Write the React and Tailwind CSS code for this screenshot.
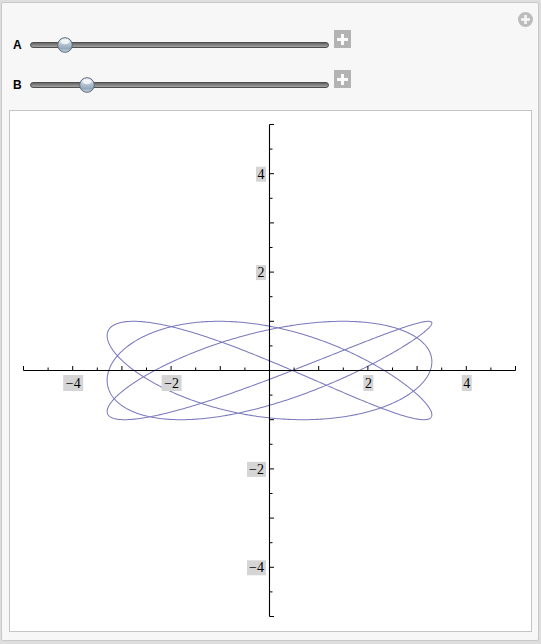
import React from 'react';

// plot coordinates (page pixels)
const OX = 269.5;
const OY = 370.5;
const S = 49.2;
const px = (v) => OX + v * S;
const py = (v) => OY - v * S;

function curvePath() {
  const pts = [];
  const n = 1400;
  for (let i = 0; i <= n; i++) {
    const t = (i / n) * Math.PI * 2;
    const x = 3.3 * Math.sin(3 * t + Math.PI / 4 - 0.2 * Math.sin(t));
    const y = -Math.sin(4 * t);
    pts.push(`${i ? 'L' : 'M'}${px(x).toFixed(2)},${py(y).toFixed(2)}`);
  }
  return pts.join('');
}

function Knob() {
  return (
    <svg width="16" height="16" viewBox="0 0 16 16">
      <defs>
        <linearGradient id="knobFill" x1="0" y1="0" x2="0" y2="1">
          <stop offset="0" stopColor="#f4f7fa" />
          <stop offset="0.45" stopColor="#b4c3d2" />
          <stop offset="0.75" stopColor="#93a7bc" />
          <stop offset="1" stopColor="#d2dde8" />
        </linearGradient>
      </defs>
      <circle cx="8" cy="8" r="7.3" fill="url(#knobFill)" stroke="#5a6774" strokeWidth="1" />
      <ellipse cx="8" cy="4.8" rx="4.2" ry="2.4" fill="#ffffff" opacity="0.7" />
    </svg>
  );
}

function PlusBox() {
  return (
    <div className="w-[17px] h-[18px] bg-[#b3b3b3] flex items-center justify-center">
      <svg width="11" height="11" viewBox="0 0 11 11">
        <rect x="4" y="0" width="3" height="11" fill="#fafafa" />
        <rect x="0" y="4" width="11" height="3" fill="#fafafa" />
      </svg>
    </div>
  );
}

function SliderRow({ label, knobX }) {
  return (
    <div className="flex items-start h-[24px]">
      <div className="w-[28px] pl-[11px] mt-[8px] text-[12px] leading-[14px] font-semibold text-black">
        {label}
      </div>
      <div className="relative w-[299px] h-[24px]">
        <div className="mt-[12px] h-[6px] rounded-full border border-[#4f4f4f] bg-gradient-to-b from-[#656565] to-[#a5a5a5]" />
        <div className="absolute top-[7px]" style={{ left: knobX - 30 - 8 }}>
          <Knob />
        </div>
      </div>
      <div className="ml-[5px]">
        <PlusBox />
      </div>
    </div>
  );
}

function Plot() {
  const ticks = [];
  for (let k = -10; k <= 10; k++) {
    if (k === 0) continue;
    const v = k / 2;
    const major = k % 2 === 0;
    const len = major ? 4.5 : 3;
    ticks.push(
      <line key={'x' + k} x1={px(v)} x2={px(v)} y1={OY} y2={OY - len} stroke="#000" strokeWidth="1" />
    );
    ticks.push(
      <line key={'y' + k} y1={py(v)} y2={py(v)} x1={OX} x2={OX + len} stroke="#000" strokeWidth="1" />
    );
  }

  const xLabels = [
    { v: -4, t: '\u22124', w: 20 },
    { v: -2, t: '\u22122', w: 20 },
    { v: 2, t: '2', w: 10 },
    { v: 4, t: '4', w: 10 },
  ];
  const yLabels = [
    { v: 4, t: '4', w: 10 },
    { v: 2, t: '2', w: 10 },
    { v: -2, t: '\u22122', w: 19 },
    { v: -4, t: '\u22124', w: 19 },
  ];

  return (
    <svg width="521" height="520" viewBox="10 111 521 520" className="block">
      <path d={curvePath()} fill="none" stroke="#6b6bb6" strokeWidth="1.05" opacity="0.9" />
      <line x1={px(-5)} x2={px(5)} y1={OY} y2={OY} stroke="#000" strokeWidth="1.1" />
      <line x1={OX} x2={OX} y1={py(5)} y2={py(-5)} stroke="#000" strokeWidth="1.1" />
      {ticks}
      {xLabels.map((l) => (
        <g key={'xl' + l.v}>
          <rect x={px(l.v) - l.w / 2 + 0.5} y={375} width={l.w} height={16} fill="#d5d5d5" />
          <text
            x={px(l.v) + 0.5}
            y={388}
            textAnchor="middle"
            fontSize="14"
            fontFamily="'Liberation Serif', serif"
            fill="#000"
          >
            {l.t}
          </text>
        </g>
      ))}
      {yLabels.map((l) => (
        <g key={'yl' + l.v}>
          <rect x={266 - l.w} y={py(l.v) - 7} width={l.w} height={15} fill="#d5d5d5" />
          <text
            x={266 - l.w / 2}
            y={py(l.v) + 5}
            textAnchor="middle"
            fontSize="14"
            fontFamily="'Liberation Serif', serif"
            fill="#000"
          >
            {l.t}
          </text>
        </g>
      ))}
    </svg>
  );
}

export default function App() {
  return (
    <div className="w-[541px] h-[644px] bg-[#dedede] pt-[2px] pl-[1px] overflow-hidden" style={{ fontFamily: "'Liberation Sans', Arial, sans-serif" }}>
      <div className="relative w-[538px] h-[639px] border border-[#c8c8c8] bg-[#f7f7f7] rounded-[2px]">
        {/* top-right options button */}
        <div className="absolute top-[9px] left-[516px] w-[15px] h-[15px] rounded-full bg-[#bcbcbc] flex items-center justify-center">
          <svg width="9" height="9" viewBox="0 0 9 9">
            <rect x="3.25" y="0" width="2.5" height="9" fill="#f7f7f7" />
            <rect x="0" y="3.25" width="9" height="2.5" fill="#f7f7f7" />
          </svg>
        </div>

        <div className="pt-[27px] flex flex-col gap-[16px]">
          <SliderRow label="A" knobX={65} />
          <SliderRow label="B" knobX={87} />
        </div>

        <div className="mt-[16px] ml-[7px] w-[523px] h-[522px] border border-[#c4c4c4] bg-white">
          <Plot />
        </div>
      </div>
    </div>
  );
}
